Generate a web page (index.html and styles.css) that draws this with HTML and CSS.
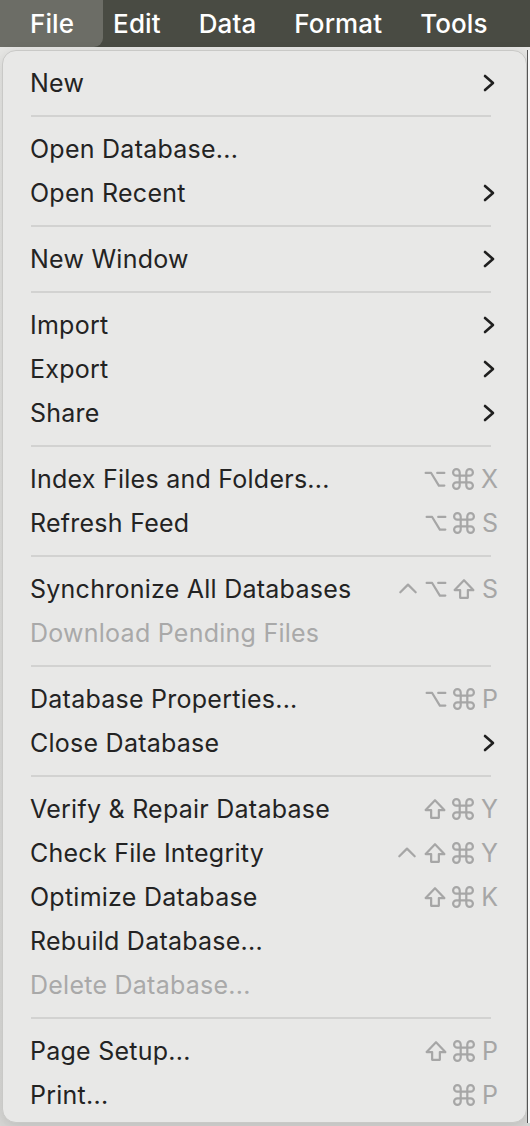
FILE: index.html
```html
<!DOCTYPE html>
<html lang="en">
<head>
<meta charset="utf-8">
<title>File menu</title>
<link rel="stylesheet" href="styles.css">
</head>
<body>
<svg width="0" height="0" class="defs">
  <defs>
    <symbol id="opt" viewBox="0 0 20 20"><path d="M1.5 4.5 H6.5 L13.5 16 H18.5 M12 4.5 H18.5"/></symbol>
    <symbol id="cmd" viewBox="2 2 20 20"><path d="M15 6v12a3 3 0 1 0 3-3H6a3 3 0 1 0 3 3V6a3 3 0 1 0-3 3h12a3 3 0 1 0-3-3"/></symbol>
    <symbol id="shift" viewBox="2 2 20 20"><path d="M8.5 20v-7H3.5L12 4l8.5 9h-5v7z"/></symbol>
    <symbol id="ctrl" viewBox="0 0 20 20"><path d="M3 13 L10 6 L17 13"/></symbol>
  </defs>
</svg>
<div class="screen">
  <nav class="menubar">
    <span class="bar-item active">File</span>
    <span class="bar-item">Edit</span>
    <span class="bar-item">Data</span>
    <span class="bar-item">Format</span>
    <span class="bar-item">Tools</span>
  </nav>
  <div class="stage">
    <div class="menu">
      <div class="row"><span class="label">New</span><svg class="chev" viewBox="0 0 12 18"><path d="M2 2 L10 9 L2 16"/></svg></div>
      <div class="sep"></div>
      <div class="row"><span class="label">Open Database...</span></div>
      <div class="row"><span class="label">Open Recent</span><svg class="chev" viewBox="0 0 12 18"><path d="M2 2 L10 9 L2 16"/></svg></div>
      <div class="sep"></div>
      <div class="row"><span class="label">New Window</span><svg class="chev" viewBox="0 0 12 18"><path d="M2 2 L10 9 L2 16"/></svg></div>
      <div class="sep"></div>
      <div class="row"><span class="label">Import</span><svg class="chev" viewBox="0 0 12 18"><path d="M2 2 L10 9 L2 16"/></svg></div>
      <div class="row"><span class="label">Export</span><svg class="chev" viewBox="0 0 12 18"><path d="M2 2 L10 9 L2 16"/></svg></div>
      <div class="row"><span class="label">Share</span><svg class="chev" viewBox="0 0 12 18"><path d="M2 2 L10 9 L2 16"/></svg></div>
      <div class="sep"></div>
      <div class="row"><span class="label">Index Files and Folders...</span><span class="keys"><svg class="k"><use href="#opt"/></svg><svg class="k"><use href="#cmd"/></svg><span class="kl">X</span></span></div>
      <div class="row"><span class="label">Refresh Feed</span><span class="keys"><svg class="k"><use href="#opt"/></svg><svg class="k"><use href="#cmd"/></svg><span class="kl">S</span></span></div>
      <div class="sep"></div>
      <div class="row"><span class="label">Synchronize All Databases</span><span class="keys"><svg class="k"><use href="#ctrl"/></svg><svg class="k"><use href="#opt"/></svg><svg class="k"><use href="#shift"/></svg><span class="kl">S</span></span></div>
      <div class="row disabled"><span class="label">Download Pending Files</span></div>
      <div class="sep"></div>
      <div class="row"><span class="label">Database Properties...</span><span class="keys"><svg class="k"><use href="#opt"/></svg><svg class="k"><use href="#cmd"/></svg><span class="kl">P</span></span></div>
      <div class="row"><span class="label">Close Database</span><svg class="chev" viewBox="0 0 12 18"><path d="M2 2 L10 9 L2 16"/></svg></div>
      <div class="sep"></div>
      <div class="row"><span class="label">Verify &amp; Repair Database</span><span class="keys"><svg class="k"><use href="#shift"/></svg><svg class="k"><use href="#cmd"/></svg><span class="kl">Y</span></span></div>
      <div class="row"><span class="label">Check File Integrity</span><span class="keys"><svg class="k"><use href="#ctrl"/></svg><svg class="k"><use href="#shift"/></svg><svg class="k"><use href="#cmd"/></svg><span class="kl">Y</span></span></div>
      <div class="row"><span class="label">Optimize Database</span><span class="keys"><svg class="k"><use href="#shift"/></svg><svg class="k"><use href="#cmd"/></svg><span class="kl">K</span></span></div>
      <div class="row"><span class="label">Rebuild Database...</span></div>
      <div class="row disabled"><span class="label">Delete Database...</span></div>
      <div class="sep"></div>
      <div class="row"><span class="label">Page Setup...</span><span class="keys"><svg class="k"><use href="#shift"/></svg><svg class="k"><use href="#cmd"/></svg><span class="kl">P</span></span></div>
      <div class="row"><span class="label">Print...</span><span class="keys"><svg class="k"><use href="#cmd"/></svg><span class="kl">P</span></span></div>
    </div>
    <div class="backdrop-edge"></div>
  </div>
</div>
</body>
</html>
```
FILE: styles.css
```css
* { box-sizing: border-box; }
html, body {
  margin: 0;
  padding: 0;
  width: 530px;
  height: 1126px;
  overflow: hidden;
  background: #dcdcdc;
  font-family: Inter, "Liberation Sans", sans-serif;
}
.defs { position: absolute; width: 0; height: 0; overflow: hidden; }
.screen {
  width: 530px;
  height: 1126px;
  display: flex;
  flex-direction: column;
}
.menubar {
  height: 47px;
  flex: none;
  background: #494b43;
  display: flex;
  align-items: stretch;
}
.bar-item {
  display: flex;
  align-items: center;
  color: #ffffff;
  font-size: 26px;
  font-weight: 500;
  letter-spacing: 0.1px;
  padding: 0 19px;
}
.bar-item.active {
  background: #6c6d66;
  border-radius: 0 0 9px 0;
  padding: 0 29px 0 30px;
  margin-right: -9px;
}
.stage {
  flex: 1;
  display: flex;
  background: linear-gradient(#e6e6e4, #d8d8d6);
  padding: 3px 0 3px 2px;
}
.menu {
  width: 525px;
  background: #e8e8e7;
  border: 1px solid #c9c9c7;
  border-radius: 14px;
  padding: 10px 0 5px 0;
  box-shadow: 0 4px 14px rgba(0,0,0,0.12);
  display: flex;
  flex-direction: column;
}
.backdrop-edge {
  flex: 1;
  background: #f7f7f7;
  border-left: 1px solid #555;
}
.row {
  height: 44px;
  flex: none;
  display: flex;
  align-items: center;
  justify-content: space-between;
  padding: 0 30px 0 27px;
  font-size: 25px;
  letter-spacing: 0.25px;
  color: #232323;
}
.row.disabled { color: #a9a9a9; }
.label { white-space: nowrap; }
.sep {
  height: 22px;
  flex: none;
  display: flex;
  align-items: center;
  padding: 0 35px 0 28px;
}
.sep::before {
  content: "";
  display: block;
  width: 100%;
  height: 2px;
  background: #d2d2d1;
}
.chev {
  width: 12px;
  height: 18px;
  margin-right: 1px;
  fill: none;
  stroke: #1f1f1f;
  stroke-width: 2.6;
  stroke-linecap: round;
  stroke-linejoin: round;
}
.keys {
  display: flex;
  align-items: center;
  gap: 6px;
  margin-right: -2px;
  color: #a6a6a6;
}
.k {
  width: 22px;
  height: 22px;
  fill: none;
  stroke: #a6a6a6;
  stroke-width: 2;
  stroke-linecap: round;
  stroke-linejoin: round;
}
.kl {
  font-size: 25px;
  letter-spacing: 0;
  margin-left: 1px;
}
```
